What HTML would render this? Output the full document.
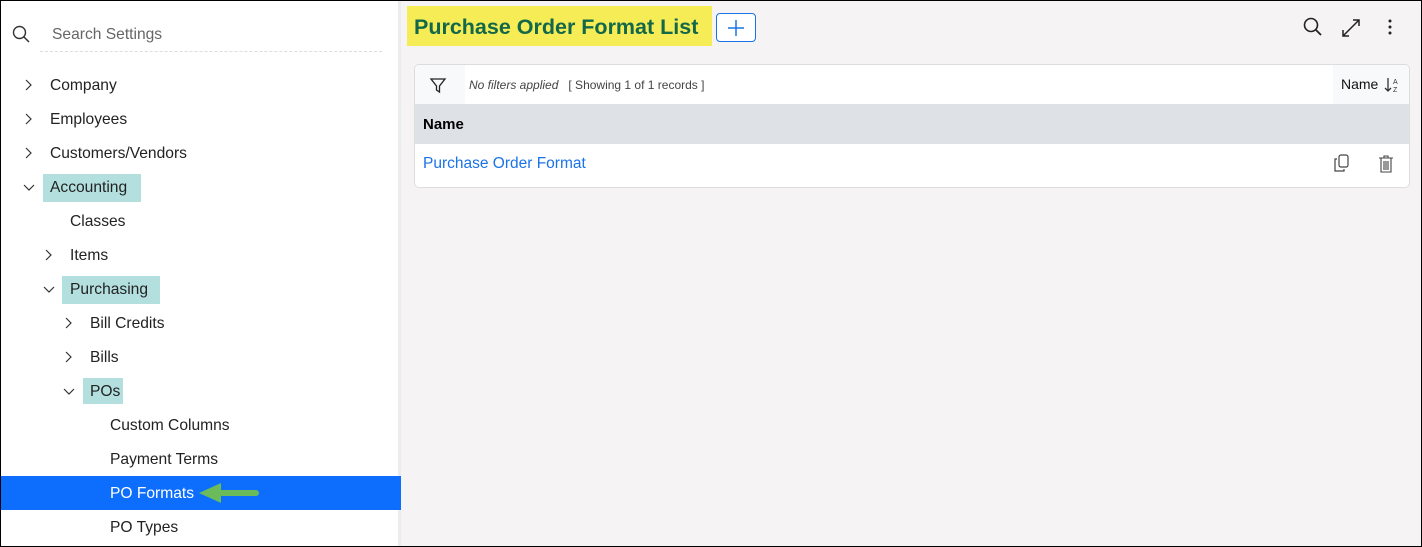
<!DOCTYPE html>
<html><head><style>
*{margin:0;padding:0;box-sizing:border-box}
body{width:1422px;height:547px;overflow:hidden;font-family:"Liberation Sans",sans-serif;background:#f5f3f3;position:relative}
.frame{position:absolute;inset:0;border:1px solid #000;pointer-events:none;z-index:10}
.side{position:absolute;left:0;top:0;width:401px;height:547px;background:#fff;border-right:3px solid #ececec}
.t{position:absolute;font-size:15.6px;color:#222;line-height:20px}
.hl{position:absolute;background:#b3e0df}
.main{position:absolute;left:404px;top:0;right:0;bottom:0}
</style></head><body>
<div class="side">
 <svg style="position:absolute;left:12px;top:25px" width="18" height="18" viewBox="0 0 18 18"><circle cx="7.5" cy="7.5" r="6" fill="none" stroke="#333" stroke-width="1.4"/><path d="M12 12l5 5" stroke="#333" stroke-width="1.5"/></svg>
 <div class="t" style="left:52px;top:25px;color:#666">Search Settings</div>
 <div style="position:absolute;left:40px;top:51px;width:342px;border-top:1px dashed #ddd"></div>

 <div class="hl" style="left:43px;top:174px;width:98px;height:28px"></div>
 <div class="hl" style="left:62px;top:276px;width:98px;height:28px"></div>
 <div class="hl" style="left:83px;top:378px;width:40px;height:26px"></div>
 <div style="position:absolute;left:0;top:476px;width:401px;height:34px;background:#0d6efd"></div>

 <svg style="position:absolute;left:0;top:0" width="401" height="547">
  <g fill="none" stroke="#333" stroke-width="1.2">
   <path d="M26 80l5 5-5 5"/><path d="M26 114l5 5-5 5"/><path d="M26 148l5 5-5 5"/>
   <path d="M24 185l5 5 5-5"/>
   <path d="M46 250l5 5-5 5"/>
   <path d="M44 287l5 5 5-5"/>
   <path d="M66 318l5 5-5 5"/><path d="M66 352l5 5-5 5"/>
   <path d="M64 389l5 5 5-5"/>
  </g>
  <path d="M210 493h46" stroke="#6cbb5a" stroke-width="6" stroke-linecap="round"/>
  <path d="M199 493l22-10v20z" fill="#6cbb5a"/>
 </svg>
 <div class="t" style="left:50px;top:76px">Company</div>
 <div class="t" style="left:50px;top:110px">Employees</div>
 <div class="t" style="left:50px;top:144px">Customers/Vendors</div>
 <div class="t" style="left:50px;top:178px">Accounting</div>
 <div class="t" style="left:70px;top:212px">Classes</div>
 <div class="t" style="left:70px;top:246px">Items</div>
 <div class="t" style="left:70px;top:280px">Purchasing</div>
 <div class="t" style="left:90px;top:314px">Bill Credits</div>
 <div class="t" style="left:90px;top:348px">Bills</div>
 <div class="t" style="left:90px;top:382px">POs</div>
 <div class="t" style="left:110px;top:416px">Custom Columns</div>
 <div class="t" style="left:110px;top:450px">Payment Terms</div>
 <div class="t" style="left:110px;top:484px;color:#fff">PO Formats</div>
 <div class="t" style="left:110px;top:518px">PO Types</div>
</div>

<div style="position:absolute;left:407px;top:6px;width:305px;height:40px;background:#f6ec55"></div>
<div style="position:absolute;left:414px;top:13px;font-size:21.5px;font-weight:bold;color:#14684a;line-height:28px">Purchase Order Format List</div>
<div style="position:absolute;left:716px;top:13px;width:40px;height:29px;border:1px solid #1a73e8;border-radius:4px;background:#fff"></div>
<svg style="position:absolute;left:726px;top:18px" width="20" height="20"><path d="M10 2v16M2 10h16" stroke="#1a73e8" stroke-width="1.5"/></svg>

<svg style="position:absolute;left:1300px;top:15px" width="100" height="26">
 <circle cx="11" cy="10" r="6.5" fill="none" stroke="#222" stroke-width="1.6"/><path d="M16 15l5 5" stroke="#222" stroke-width="1.8"/>
 <path d="M43 21l16-16M53 5h6v6M43 15v6h6" fill="none" stroke="#222" stroke-width="1.5"/>
 <circle cx="90" cy="6" r="1.5" fill="#222"/><circle cx="90" cy="12" r="1.5" fill="#222"/><circle cx="90" cy="18" r="1.5" fill="#222"/>
</svg>

<div style="position:absolute;left:414px;top:64px;width:996px;height:124px;background:#fff;border:1px solid #ddd;border-radius:5px;overflow:hidden">
 <div style="position:absolute;left:0;top:0;width:50px;height:39px;background:#f8f9fb"></div>
 <svg style="position:absolute;left:14px;top:11px" width="18" height="18"><path d="M2 3h14l-5.5 7v6l-3-2v-4z" fill="none" stroke="#222" stroke-width="1.3"/></svg>
 <div style="position:absolute;left:54px;top:13px;font-size:12px;color:#444"><i>No filters applied</i>&nbsp;&nbsp; [ Showing 1 of 1 records ]</div>
 <div style="position:absolute;right:0;top:0;width:76px;height:39px;background:#f8f9fb"></div>
 <div style="position:absolute;left:926px;top:11px;font-size:14px;color:#111">Name</div>
 <svg style="position:absolute;left:969px;top:11px" width="16" height="18"><path d="M4 2v13M1 12l3 3 3-3" fill="none" stroke="#333" stroke-width="1.3"/><text x="9" y="8" font-size="7" font-family="Liberation Sans" fill="#333">A</text><text x="9" y="16" font-size="7" font-family="Liberation Sans" fill="#333">Z</text></svg>
 <div style="position:absolute;left:0;top:39px;width:100%;height:40px;background:#dee2e6"></div>
 <div style="position:absolute;left:8px;top:51px;font-size:15px;font-weight:bold;color:#000">Name</div>
 <div style="position:absolute;left:8px;top:90px;font-size:15.5px;color:#1a73e8">Purchase Order Format</div>
 <svg style="position:absolute;left:918px;top:89px" width="60" height="20">
  <rect x="6" y="1" width="9" height="12" rx="2" fill="none" stroke="#444" stroke-width="1.2"/><path d="M4 5H2v12h9v-2" fill="none" stroke="#444" stroke-width="1.2"/>
  <path d="M46 4h14M51 4V2h4v2M48 4v14h10V4M51 7v9M53 7v9M55 7v9" fill="none" stroke="#444" stroke-width="1.1"/>
 </svg>
</div>
<div class="frame"></div>
</body></html>
